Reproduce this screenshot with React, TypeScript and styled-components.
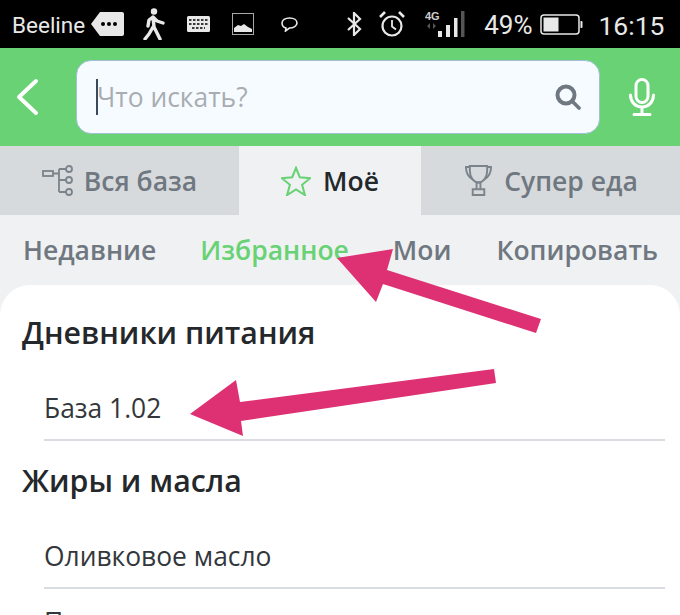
import * as React from 'react'
import styled, { createGlobalStyle } from 'styled-components'

const Global = createGlobalStyle`
  html, body { margin: 0; padding: 0; background: #fff; }
  body { font-family: 'Open Sans', 'Noto Sans', sans-serif; }
`

const Page = styled.div`
  position: relative;
  width: 680px;
  height: 615px;
  overflow: hidden;
  background: #eff1f3;
`

const StatusBar = styled.div`
  height: 48px;
  background: #000;
  display: flex;
  align-items: center;
  color: #e8e8e8;
  font-family: Roboto, sans-serif;
  padding-left: 12px;
  box-sizing: border-box;
`

const StatusText = styled.span<{ $left?: number; $size?: number }>`
  margin-left: ${p => p.$left || 0}px;
  padding-top: 3px;
  font-size: ${p => p.$size || 22.5}px;
  line-height: 45px;
  white-space: nowrap;
`

const StatusIcon = styled.svg<{ $left: number }>`
  margin-left: ${p => p.$left}px;
  flex: none;
  display: block;
`

const SearchBar = styled.div`
  height: 98px;
  background: #68d274;
  display: flex;
  align-items: center;
  padding-left: 16px;
  box-sizing: border-box;
`

const BackIcon = styled.svg`
  flex: none;
`

const SearchField = styled.div`
  width: 524px;
  height: 74px;
  margin-left: 36px;
  box-sizing: border-box;
  background: #f6fbff;
  border: 1px solid #a3bfd6;
  border-radius: 15px;
  display: flex;
  align-items: center;
  padding: 0 18px 0 19px;
`

const Caret = styled.div`
  width: 2px;
  height: 36px;
  background: #3a4a5a;
  flex: none;
`

const Placeholder = styled.span`
  flex: 1;
  font-size: 26.4px;
  color: #a9adb1;
  margin-left: -1px;
`

const MicIcon = styled.svg`
  margin-left: 29px;
  flex: none;
`

const Tabs = styled.div`
  height: 69px;
  display: grid;
  grid-template-columns: 239px 182px 259px;
`

const Tab = styled.div<{ $active?: boolean; $gap?: number; $nudge?: number }>`
  display: flex;
  align-items: center;
  justify-content: center;
  gap: ${p => p.$gap ?? 12}px;
  padding-left: ${p => p.$nudge || 0}px;
  background: ${p => (p.$active ? '#eff1f3' : '#d7dadc')};
  color: ${p => (p.$active ? '#25282b' : '#6f7780')};
  font-size: 26.5px;
  font-weight: 600;
`

const SubTabs = styled.div`
  height: 70px;
  display: flex;
  align-items: center;
  padding-left: 23px;
  font-size: 26.5px;
  font-weight: 600;
`

const SubTab = styled.span<{ $active?: boolean; $left?: number }>`
  margin-left: ${p => p.$left || 0}px;
  color: ${p => (p.$active ? '#68d274' : '#6f7780')};
  white-space: nowrap;
`

const Card = styled.div`
  background: #fff;
  border-radius: 30px 30px 0 0;
  height: 400px;
  box-sizing: border-box;
  padding: 8px 15px 0 22px;
`

const SectionTitle = styled.div`
  font-size: 30.3px;
  font-weight: 600;
  color: #25282b;
  height: 78px;
  box-sizing: border-box;
  padding-top: 17px;
  line-height: 46px;
`

const Row = styled.div<{ $top?: number }>`
  margin-left: 22px;
  height: 70px;
  box-sizing: border-box;
  padding-top: ${p => p.$top ?? 14}px;
  border-bottom: 2px solid #d9dce0;
  font-size: 26.4px;
  color: #33373b;
  line-height: 46px;
`

const ArrowLayer = styled.svg`
  position: absolute;
  left: 0;
  top: 0;
  pointer-events: none;
`

const TreeIcon = () => (
  <svg width="32" height="32" viewBox="0 0 32 32" fill="none" stroke="#7b838b" strokeWidth="1.8">
    <rect x="1" y="6" width="10" height="5" />
    <path d="M11 8.5h6M17 4v23M17 4h7M17 15h7M17 27h7" />
    <circle cx="27" cy="4" r="3" />
    <circle cx="27" cy="15" r="3" />
    <circle cx="27" cy="27" r="3" />
  </svg>
)

const StarIcon = () => (
  <svg width="30" height="30" viewBox="0 0 32 32" fill="none" stroke="#68d274" strokeWidth="2.2" strokeLinejoin="miter">
    <path d="M16 2l4 10 11 1-8.500 7 3 11L16 25l-9.500 6 3-11L1 13l11-1z" />
  </svg>
)

const TrophyIcon = () => (
  <svg width="27" height="31" viewBox="0 0 28 32" fill="none" stroke="#7b838b" strokeWidth="2">
    <path d="M5 1h18v5c0 7-4 12-9 12S5 13 5 6z" />
    <path d="M5 2H1c0 6 2 10 7 13M23 2h4c0 6-2 10-7 13" />
    <path d="M12 18h4v7h-4zM8 25h12v6H8z" />
  </svg>
)

const App = () => (
  <Page>
    <Global />
    <StatusBar>
      <StatusText>Beeline</StatusText>
      {/* message tag */}
      <StatusIcon $left={6} width="33" height="24" viewBox="0 0 33 24">
        <path d="M9 0h22a2 2 0 0 1 2 2v20a2 2 0 0 1-2 2H9L0 12z" fill="#e8e8e8" />
        <circle cx="12" cy="12" r="2" fill="#000" />
        <circle cx="18" cy="12" r="2" fill="#000" />
        <circle cx="24" cy="12" r="2" fill="#000" />
      </StatusIcon>
      {/* walker */}
      <StatusIcon $left={19} width="22" height="32" viewBox="0 0 22 32">
        <circle cx="11" cy="3.5" r="3.2" fill="#e8e8e8" />
        <path d="M10 9l-4 3-1 6M10 9l4 4 6 2M10 9l1 10 6 12M10 19L6 26l-4 5" fill="none" stroke="#e8e8e8" strokeWidth="3.4" strokeLinecap="round" strokeLinejoin="round" />
      </StatusIcon>
      {/* keyboard */}
      <StatusIcon $left={22} width="23" height="16" viewBox="0 0 23 16">
        <rect width="23" height="16" rx="1.5" fill="#e8e8e8" />
        <path d="M2 4h19M2 8h19M5 12h13" stroke="#000" strokeWidth="1.4" strokeDasharray="2.5 1.5" />
      </StatusIcon>
      {/* picture */}
      <StatusIcon $left={22} width="22" height="22" viewBox="0 0 22 22">
        <rect x="0.5" y="0.5" width="21" height="21" fill="none" stroke="#a8a8a8" />
        <path d="M2 19v-4l4-3 3 1 3-2 4 3 4 2v3z" fill="#e8e8e8" />
      </StatusIcon>
      {/* chat bubble */}
      <StatusIcon $left={27} width="17" height="15" viewBox="0 0 17 15">
        <path d="M8.5 1C4 1 1 3.2 1 6s2 4.500 4 5l-.5 3 4-3c4 0 7.500-2 7.500-5S13 1 8.500 1z" fill="none" stroke="#e8e8e8" strokeWidth="1.6" />
      </StatusIcon>
      {/* bluetooth */}
      <StatusIcon $left={48} width="16" height="24" viewBox="0 0 16 24">
        <path d="M2 6l12 11-6 6V1l6 6L2 18" fill="none" stroke="#e8e8e8" strokeWidth="2.2" />
      </StatusIcon>
      {/* alarm */}
      <StatusIcon $left={17} width="26" height="26" viewBox="0 0 26 26" fill="none" stroke="#e8e8e8">
        <circle cx="13" cy="15" r="9.5" strokeWidth="2.2" />
        <path d="M13 9v6.500l4 3" strokeWidth="1.8" />
        <path d="M1 6l5-5M25 6l-5-5" strokeWidth="2.6" />
      </StatusIcon>
      {/* signal */}
      <StatusIcon $left={20} width="40" height="28" viewBox="0 0 40 28">
        <text x="0" y="10" fontFamily="'Liberation Sans', sans-serif" fontWeight="700" fontSize="11" fill="#cfcfcf">4G</text>
        <path d="M5 13l-3 3 3 3zM8 13l3 3-3 3z" fill="#555" />
        <rect x="13" y="21" width="4" height="6" fill="#e8e8e8" />
        <rect x="21" y="15" width="4" height="12" fill="#e8e8e8" />
        <rect x="29" y="8" width="3.5" height="19" fill="#e8e8e8" />
        <rect x="36" y="1" width="3.5" height="26" fill="#555" />
      </StatusIcon>
      <StatusText $left={19} $size={26}>49%</StatusText>
      {/* battery */}
      <StatusIcon $left={8} width="43" height="21" viewBox="0 0 43 21">
        <rect x="1" y="1" width="38" height="19" rx="3" fill="none" stroke="#e8e8e8" strokeWidth="1.5" />
        <rect x="3.5" y="3.5" width="15" height="14" fill="#e8e8e8" />
        <path d="M40.500 7h1a1 1 0 0 1 1 1v5a1 1 0 0 1-1 1h-1z" fill="#e8e8e8" />
      </StatusIcon>
      <StatusText $left={15} $size={26.5}>16:15</StatusText>
    </StatusBar>

    <SearchBar>
      <BackIcon width="24" height="38" viewBox="0 0 24 38" fill="none" stroke="#fff" strokeWidth="4" strokeLinecap="round" strokeLinejoin="round">
        <path d="M20 3L3 19l17 16" />
      </BackIcon>
      <SearchField>
        <Caret />
        <Placeholder>Что искать?</Placeholder>
        <svg width="26" height="26" viewBox="0 0 26 26" fill="none" stroke="#6f7780">
          <circle cx="11" cy="11" r="8.5" strokeWidth="4" />
          <path d="M17 17l7 7" strokeWidth="3.6" strokeLinecap="round" />
        </svg>
      </SearchField>
      <MicIcon width="26" height="38" viewBox="0 0 26 38" fill="none" stroke="#fff" strokeWidth="3">
        <rect x="7" y="1.5" width="12" height="23" rx="6" />
        <path d="M1.500 17c0 7 5 12 11.500 12s11.500-5 11.500-12M13 29v7M5 36.500h16" strokeLinecap="round" />
      </MicIcon>
    </SearchBar>

    <Tabs>
      <Tab $gap={10}>
        <TreeIcon />
        Вся база
      </Tab>
      <Tab $active>
        <StarIcon />
        Моё
      </Tab>
      <Tab $nudge={2}>
        <TrophyIcon />
        Супер еда
      </Tab>
    </Tabs>

    <SubTabs>
      <SubTab>Недавние</SubTab>
      <SubTab $active $left={44}>Избранное</SubTab>
      <SubTab $left={44}>Мои</SubTab>
      <SubTab $left={45}>Копировать</SubTab>
    </SubTabs>

    <Card>
      <SectionTitle>Дневники питания</SectionTitle>
      <Row>База 1.02</Row>
      <SectionTitle>Жиры и масла</SectionTitle>
      <Row>Оливковое масло</Row>
      <Row $top={10}>Подсолнечное масло</Row>
    </Card>

    <ArrowLayer width="680" height="615" viewBox="0 0 680 615">
      <path d="M337 258L393 249L387 270L541 319L536 333L383 284L376 302Z" fill="#de3173" />
      <path d="M190 414L236 380L240 402L494 369L496 383L241 421L243 436Z" fill="#de3173" />
    </ArrowLayer>
  </Page>
)

export default App
